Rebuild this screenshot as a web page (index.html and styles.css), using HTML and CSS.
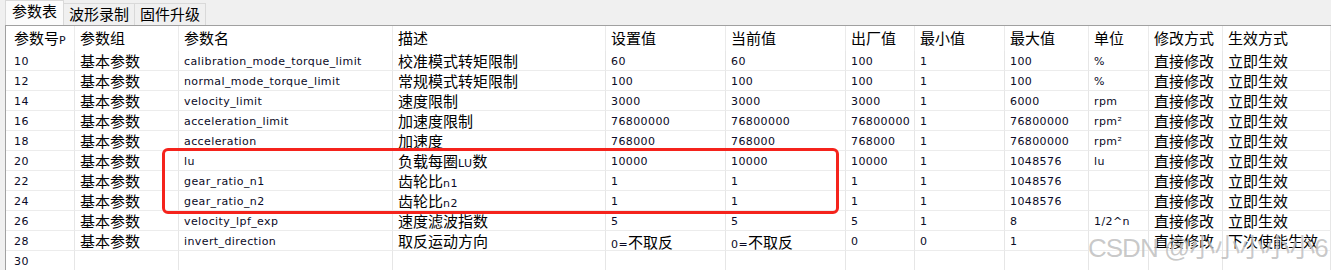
FILE: index.html
```html
<!DOCTYPE html>
<html lang="zh-CN">
<head>
    <meta charset="UTF-8">
    <title>参数表</title>
    <link rel="stylesheet" href="styles.css">
</head>
<body>
    <div class="tabs">
        <div class="tab active">参数表</div>
        <div class="tab">波形录制</div>
        <div class="tab">固件升级</div>
    </div>
    <div class="panel">
        <div class="row head">
            <div>参数号<span class="en">P</span></div>
            <div>参数组</div>
            <div>参数名</div>
            <div>描述</div>
            <div>设置值</div>
            <div>当前值</div>
            <div>出厂值</div>
            <div>最小值</div>
            <div>最大值</div>
            <div>单位</div>
            <div>修改方式</div>
            <div>生效方式</div>
        </div>
        <div class="row">
            <div>10</div><div class="zh">基本参数</div><div>calibration_mode_torque_limit</div><div class="zh">校准模式转矩限制</div>
            <div>60</div><div>60</div><div>100</div><div>1</div><div>100</div><div>%</div><div class="zh">直接修改</div><div class="zh">立即生效</div>
        </div>
        <div class="row">
            <div>12</div><div class="zh">基本参数</div><div>normal_mode_torque_limit</div><div class="zh">常规模式转矩限制</div>
            <div>100</div><div>100</div><div>100</div><div>1</div><div>100</div><div>%</div><div class="zh">直接修改</div><div class="zh">立即生效</div>
        </div>
        <div class="row">
            <div>14</div><div class="zh">基本参数</div><div>velocity_limit</div><div class="zh">速度限制</div>
            <div>3000</div><div>3000</div><div>3000</div><div>1</div><div>6000</div><div>rpm</div><div class="zh">直接修改</div><div class="zh">立即生效</div>
        </div>
        <div class="row">
            <div>16</div><div class="zh">基本参数</div><div>acceleration_limit</div><div class="zh">加速度限制</div>
            <div>76800000</div><div>76800000</div><div>76800000</div><div>1</div><div>76800000</div><div>rpm²</div><div class="zh">直接修改</div><div class="zh">立即生效</div>
        </div>
        <div class="row">
            <div>18</div><div class="zh">基本参数</div><div>acceleration</div><div class="zh">加速度</div>
            <div>768000</div><div>768000</div><div>768000</div><div>1</div><div>76800000</div><div>rpm²</div><div class="zh">直接修改</div><div class="zh">立即生效</div>
        </div>
        <div class="row">
            <div>20</div><div class="zh">基本参数</div><div>lu</div><div class="zh">负载每圈<span class="en">LU</span>数</div>
            <div>10000</div><div>10000</div><div>10000</div><div>1</div><div>1048576</div><div>lu</div><div class="zh">直接修改</div><div class="zh">立即生效</div>
        </div>
        <div class="row">
            <div>22</div><div class="zh">基本参数</div><div>gear_ratio_n1</div><div class="zh">齿轮比<span class="en">n1</span></div>
            <div>1</div><div>1</div><div>1</div><div>1</div><div>1048576</div><div></div><div class="zh">直接修改</div><div class="zh">立即生效</div>
        </div>
        <div class="row">
            <div>24</div><div class="zh">基本参数</div><div>gear_ratio_n2</div><div class="zh">齿轮比<span class="en">n2</span></div>
            <div>1</div><div>1</div><div>1</div><div>1</div><div>1048576</div><div></div><div class="zh">直接修改</div><div class="zh">立即生效</div>
        </div>
        <div class="row">
            <div>26</div><div class="zh">基本参数</div><div>velocity_lpf_exp</div><div class="zh">速度滤波指数</div>
            <div>5</div><div>5</div><div>5</div><div>1</div><div>8</div><div>1/2^n</div><div class="zh">直接修改</div><div class="zh">立即生效</div>
        </div>
        <div class="row">
            <div>28</div><div class="zh">基本参数</div><div>invert_direction</div><div class="zh">取反运动方向</div>
            <div>0=<span class="zh">不取反</span></div><div>0=<span class="zh">不取反</span></div><div>0</div><div>0</div><div>1</div><div></div><div class="zh">直接修改</div><div class="zh">下次使能生效</div>
        </div>
        <div class="row">
            <div>30</div><div></div><div></div><div></div>
            <div></div><div></div><div></div><div></div><div></div><div></div><div></div><div></div>
        </div>

        <div class="highlight"></div>
        <div class="watermark">CSDN @小小小小小6</div>
    </div>
</body>
</html>
```

FILE: styles.css
```css
body {
    margin: 0;
    background-color: #f0f0f0;
    font-family: "DejaVu Sans", "Noto Sans CJK SC", sans-serif;
    font-size: 11px;
    color: #000;
    overflow: hidden;
}
.tabs {
    display: flex;
    align-items: flex-end;
    height: 25px;
    padding-left: 5px;
}
.tab {
    font-family: "Noto Sans CJK SC", sans-serif;
    font-size: 15px;
    height: 21px;
    line-height: 20px;
    padding: 0 5px;
    margin-left: -1px;
    border: 1px solid #d9d9d9;
    border-bottom: none;
    background-color: #f0f0f0;
}
.tab.active {
    height: 24px;
    line-height: 20px;
    padding: 0 6px;
    margin-left: 0;
    background-color: #fbfbfb;
}
.panel {
    position: relative;
    height: 245px;
    margin-left: 5px;
    border-left: 1px solid #a0a0a0;
    border-top: 1px solid #a0a0a0;
    background-color: #fff;
}
.row {
    display: grid;
    grid-template-columns: 69px 104px 214px 213px 120px 120px 69px 90px 84px 60px 74px 1fr;
    height: 20px;
}
.row > div {
    box-sizing: border-box;
    padding: 2px 0 0 5px;
    line-height: 17px;
    border-right: 1px solid #e6e6e6;
    border-bottom: 1px solid #ececec;
    white-space: nowrap;
    overflow: hidden;
    color: #0a0a26;
    letter-spacing: 0.4px;
}
.row > div:first-child {
    padding-left: 8px;
}
.head {
    height: 25px;
}
.head > div {
    padding-top: 0;
    line-height: 23px;
    border-bottom: none;
    border-right-color: #ebebeb;
    font-family: "Noto Sans CJK SC", sans-serif;
    font-size: 15px;
    color: #000;
    letter-spacing: 0;
}
.row > .zh {
    padding-top: 0;
    line-height: 20px;
}
.row .zh {
    font-family: "Noto Sans CJK SC", sans-serif;
    font-size: 15px;
    color: #000;
    letter-spacing: 0;
}
.row .en {
    font-family: "DejaVu Sans", sans-serif;
    font-size: 11px;
    color: #0a0a26;
    letter-spacing: 0.4px;
}
.highlight {
    position: absolute;
    left: 156px;
    top: 122px;
    width: 677px;
    height: 66px;
    box-sizing: border-box;
    border: 3px solid #f5231c;
    border-radius: 6px;
}
.watermark {
    position: absolute;
    left: 1082px;
    top: 201px;
    font-family: "Liberation Sans", "Noto Sans CJK SC", sans-serif;
    font-size: 26px;
    letter-spacing: -1px;
    white-space: nowrap;
    color: rgba(100, 100, 100, 0.35);
    text-shadow: 0 0 1px rgba(255, 255, 255, 0.8);
}
```
